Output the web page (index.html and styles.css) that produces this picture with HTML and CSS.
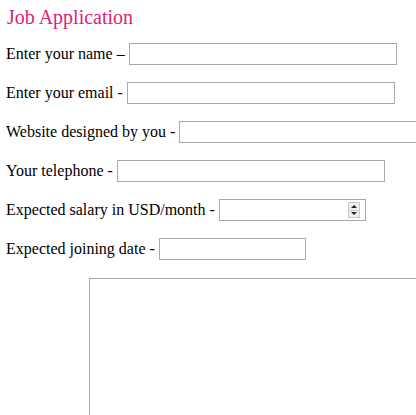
FILE: index.html
```html
<!DOCTYPE html>
<html>
<head>
<link rel="stylesheet" href="styles.css">
</head>
<body>
<div class="title">Job Application</div>
<form class="form">
  <label class="row">Enter your name &ndash;&nbsp;<input class="field wide" type="text"></label>
  <label class="row">Enter your email -&nbsp;<input class="field wide" type="text"></label>
  <label class="row">Website designed by you -&nbsp;<input class="field wide" type="text"></label>
  <label class="row">Your telephone -&nbsp;<input class="field wide" type="text"></label>
  <label class="row">Expected salary in USD/month -&nbsp;<span class="numbox"><input class="numinput" type="text"><span class="spin"><span class="arrow up"></span><span class="arrow down"></span></span></span></label>
  <label class="row">Expected joining date -&nbsp;<input class="field narrow" type="text"></label>
  <textarea class="message"></textarea>
</form>
</body>
</html>
```
FILE: styles.css
```css
body {
  margin: 0;
  padding: 6px 7px 0 6px;
  font-family: "Liberation Serif", serif;
  font-size: 16px;
  color: #000;
  background: #fff;
  height: 409px;
  overflow: hidden;
}
.title {
  color: #e0207a;
  font-size: 20px;
  line-height: 22px;
  margin-bottom: 15px;
  padding-left: 1px;
}
.form { display: flex; flex-direction: column; }
.row {
  display: flex;
  align-items: center;
  height: 22px;
  margin-bottom: 17px;
  white-space: nowrap;
}
.field, .numbox {
  box-sizing: border-box;
  height: 22px;
  border: 1px solid #a9a9a9;
  background: #fff;
  padding: 0 2px;
  margin: 0;
  flex: none;
}
.wide { width: 268px; }
.narrow { width: 147px; }
.numbox {
  width: 147px;
  display: flex;
  align-items: center;
  padding: 0 5px 0 0;
}
.numinput {
  flex: 1;
  min-width: 0;
  border: 0;
  outline: 0;
  height: 18px;
  padding: 0 2px;
}
.spin {
  display: flex;
  flex-direction: column;
  width: 12px;
  height: 16px;
  border: 1px solid #c9c9c9;
  background: #f0f0f0;
  box-sizing: border-box;
}
.arrow {
  flex: 1;
  display: flex;
  align-items: center;
  justify-content: center;
}
.arrow.up { border-bottom: 1px solid #c9c9c9; }
.arrow.up::after {
  content: "";
  border-left: 3px solid transparent;
  border-right: 3px solid transparent;
  border-bottom: 3px solid #222;
}
.arrow.down::after {
  content: "";
  border-left: 3px solid transparent;
  border-right: 3px solid transparent;
  border-top: 3px solid #222;
}
.message {
  margin: 1px 0 0 83px;
  width: 360px;
  height: 180px;
  border: 1px solid #a9a9a9;
  resize: none;
  flex: none;
}
```
